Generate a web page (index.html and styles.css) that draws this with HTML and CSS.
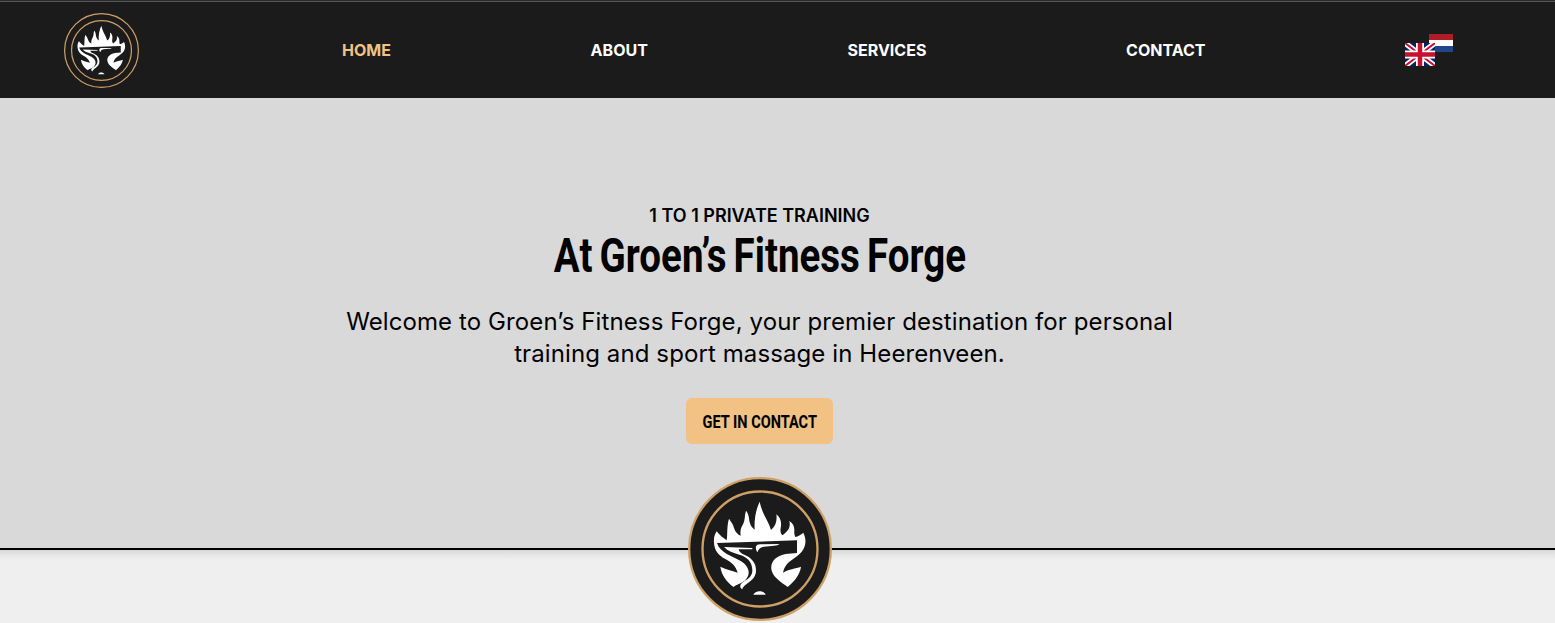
FILE: index.html
```html
<!DOCTYPE html>
<html lang="en">
<head>
<meta charset="utf-8">
<title>Groen’s Fitness Forge</title>
<link rel="stylesheet" href="styles.css">
</head>
<body>
<svg class="defs" aria-hidden="true">
  <symbol id="forge-logo" viewBox="24 21 432 432">
    <circle cx="240" cy="237" r="212.500" fill="#1b1b1b" stroke="#cfa066" stroke-width="7"/>
    <circle cx="240" cy="237" r="172.500" fill="none" stroke="#cfa066" stroke-width="7"/>
    <g fill="#fff">
      <path d="M110 184C118 194 129 204 140 211C143 195 140 166 147 146C153 155 159 162 162 174C166 187 174 194 182 197C180 184 182 174 188 165C196 151 193 138 198 122C207 132 207 146 209 157C212 168 217 174 224 179C222 149 228 117 239 95C242 109 246 120 251 131C257 145 267 158 273 180C286 170 292 155 289 133C301 142 306 157 302 174C300 186 303 191 307 196C322 185 333 174 328 153C339 159 344 171 343 183C342 190 344 196 346 201C354 199 362 194 370 188C378 205 379 222 370 238C359 259 333 267 319 285C313 293 311 300 309 308C327 297 346 296 363 290C360 314 342 335 323 351C306 337 282 325 275 302C268 274 290 258 317 252L351 249V211L111 219C120 249 157 258 182 273C210 290 213 315 194 332C181 342 170 342 161 351C140 336 125 316 121 290C137 297 155 302 173 308C168 289 154 276 136 267C116 256 103 242 102 218C101 205 103 194 110 184Z"/>
      <path d="M132 231L217 234V238H176C177 244 182 249 188 252C216 263 229 280 228 303C227 335 192 339 187 358C176 350 181 341 191 335C208 325 217 317 217 301C217 273 199 260 178 254C160 249 143 243 132 231Z"/>
      <path d="M228 229Q230 223 240 223L299 222Q293 227 282 227L252 230Q238 231 232 247Q226 240 228 229Z"/>
      <path d="M220 374C226 360 250 360 257 374Z"/>
    </g>
  </symbol>
</svg>
<header class="header">
  <svg class="header-logo"><use href="#forge-logo"/></svg>
  <nav class="nav">
    <a class="nav-link active">HOME</a>
    <a class="nav-link">ABOUT</a>
    <a class="nav-link">SERVICES</a>
    <a class="nav-link">CONTACT</a>
  </nav>
  <div class="flags">
    <svg class="flag-nl" viewBox="0 0 24 18"><path fill="#ae1c28" d="M0 0h24v6H0z"/><path fill="#fff" d="M0 6h24v6H0z"/><path fill="#21468b" d="M0 12h24v6H0z"/></svg>
    <svg class="flag-uk" viewBox="0 0 60 46">
      <path fill="#012169" d="M0 0h60v46H0z"/>
      <path d="M0 0L60 46M60 0L0 46" stroke="#fff" stroke-width="11"/>
      <path d="M0 0L60 46M60 0L0 46" stroke="#c8102e" stroke-width="4"/>
      <path d="M30 0V46M0 23H60" stroke="#fff" stroke-width="16"/>
      <path d="M30 0V46M0 23H60" stroke="#c8102e" stroke-width="9"/>
    </svg>
  </div>
</header>
<main class="hero">
  <p class="eyebrow">1 TO 1 PRIVATE TRAINING</p>
  <h1 class="title"><span class="title-text">At Groen’s Fitness Forge</span></h1>
  <p class="intro">Welcome to Groen’s Fitness Forge, your premier destination for personal training and sport massage in Heerenveen.</p>
  <a class="button"><span class="button-text">GET IN CONTACT</span></a>
  <svg class="badge"><use href="#forge-logo"/></svg>
</main>
<section class="next"></section>
</body>
</html>
```

FILE: styles.css
```css
* { box-sizing: border-box; }
body {
  margin: 0;
  height: 623px;
  overflow: hidden;
  background: #efefef;
  color: #000;
  font-family: Inter, sans-serif;
}
.defs { position: absolute; width: 0; height: 0; }
.header {
  display: flex;
  align-items: center;
  height: 98px;
  padding: 3px 0 0 64px;
  background: linear-gradient(#2b2b2b 0 1px, #555 1px 2px, #1b1b1b 2px);
}
.header-logo { width: 75px; height: 75px; margin-right: 203px; }
.nav { display: flex; gap: 199.700px; padding-bottom: 2px; }
.nav-link { color: #fff; font-size: 16px; font-weight: 700; line-height: 24px; white-space: nowrap; }
.nav-link.active { color: #f1c283; }
.flags { position: relative; width: 48px; height: 33px; margin-left: 199.700px; }
.flag-nl { position: absolute; top: 0; right: 0; width: 24px; height: 18px; }
.flag-uk { position: absolute; left: 0; bottom: 1px; width: 30px; height: 23px; }
.hero {
  position: relative;
  display: flex;
  flex-direction: column;
  align-items: center;
  height: 452px;
  padding: 106px 36px 0 0;
  background: #d9d9d9;
  border-bottom: 2px solid #000;
}
.eyebrow { margin: 0; font-size: 18px; font-weight: 600; line-height: 24px; }
.title { display: flex; justify-content: center; width: 412px; margin: 0; font: 700 48px/56px Roboto, sans-serif; white-space: nowrap; }
.title-text { transform: scaleX(.802); word-spacing: -3px; }
.intro { width: 850px; margin: 22px 0 0; font-size: 24px; line-height: 32px; letter-spacing: .1px; text-align: center; }
.button {
  display: flex;
  align-items: center;
  justify-content: center;
  width: 147px;
  height: 46px;
  margin-top: 28px;
  padding-top: 2px;
  border-radius: 6px;
  background: #f1c283;
  font: 700 19px/24px Roboto, sans-serif;
  white-space: nowrap;
}
.button-text { transform: scaleX(.765); }
.badge { position: absolute; z-index: 1; left: 688px; top: 379px; width: 144px; height: 144px; }
.next { height: 73px; background: linear-gradient(#d9d9d9, #efefef 9px); }
```
